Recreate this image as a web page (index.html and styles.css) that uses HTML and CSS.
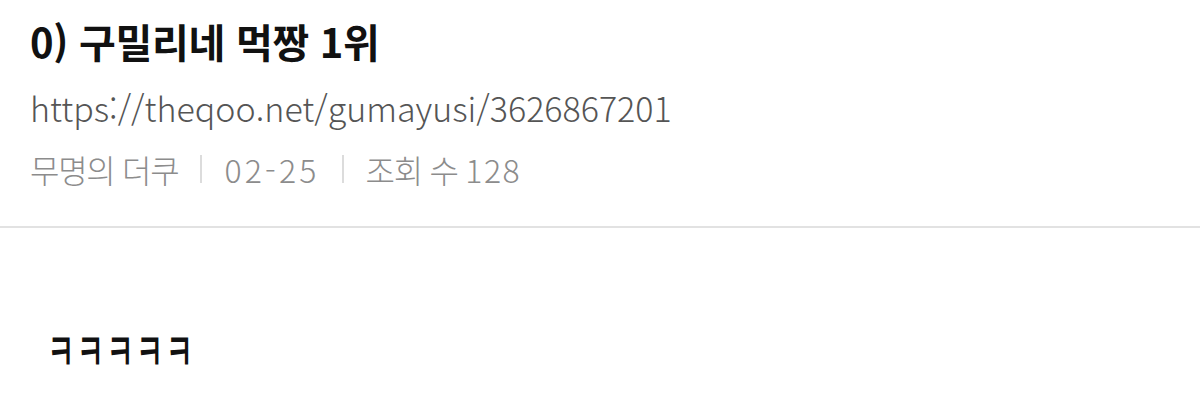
FILE: index.html
```html
<!DOCTYPE html>
<html lang="ko">
<head>
<meta charset="utf-8">
<link rel="stylesheet" href="styles.css">
</head>
<body>
<div class="header">
  <h1 class="title">0) 구밀리네 먹짱 1위</h1>
  <div class="url">https://theqoo.net/gumayusi/3626867201</div>
  <div class="meta">
    <span>무명의 더쿠</span>
    <span class="sep"></span>
    <span class="num">02-25</span>
    <span class="sep"></span>
    <span>조회 수 <span class="num num-sm">128</span></span>
  </div>
</div>
<div class="content"><span class="kk">ㅋㅋㅋㅋㅋ</span></div>
</body>
</html>
```
FILE: styles.css
```css
html, body {
  margin: 0;
  padding: 0;
  background: #fff;
}
body {
  font-family: "Noto Sans CJK KR", "Noto Sans", sans-serif;
  width: 1200px;
  height: 403px;
  overflow: hidden;
}
.header {
  padding: 15px 30px 34px;
  border-bottom: 2px solid #e2e2e2;
}
.title {
  margin: 0;
  font-size: 40px;
  font-weight: 700;
  color: #111;
  line-height: 52px;
  letter-spacing: -0.3px;
}
.url {
  font-size: 34px;
  font-weight: 300;
  color: #555;
  line-height: 50px;
  margin-top: 16px;
  letter-spacing: 0;
}
.meta {
  display: flex;
  align-items: center;
  gap: 22px;
  font-size: 32px;
  font-weight: 300;
  color: #8c8c8c;
  line-height: 46px;
  margin-top: 13px;
  letter-spacing: -1.3px;
}
.num {
  letter-spacing: 3.2px;
}
.num-sm {
  letter-spacing: 1.5px;
}
.sep {
  width: 2px;
  height: 28px;
  background: #dcdcdc;
}
.content {
  padding: 100px 47px 0;
  font-size: 30px;
  font-weight: 500;
  color: #111;
  line-height: 40px;
}
.kk {
  display: inline-block;
  letter-spacing: 2px;
  transform: scaleY(1.75);
  transform-origin: center;
}
```
